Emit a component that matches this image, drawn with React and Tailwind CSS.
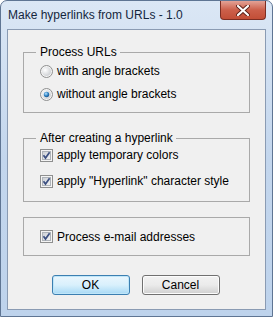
import React from 'react';

const font = { fontFamily: '"Liberation Sans", Arial, sans-serif' };

const CheckBox = () => (
  <svg width="13" height="13" viewBox="0 0 13 13" className="shrink-0">
    <defs>
      <linearGradient id="cbg" x1="0" y1="0" x2="1" y2="1">
        <stop offset="0" stopColor="#cbcfd5" />
        <stop offset="1" stopColor="#f4f4f4" />
      </linearGradient>
    </defs>
    <rect x="0.5" y="0.5" width="12" height="12" fill="#f4f4f4" stroke="#8e8f8f" />
    <rect x="2.5" y="2.5" width="8" height="8" fill="url(#cbg)" stroke="#aeb3b9" />
    <path d="M3.5 6.2 L5.5 9 L9.6 3.2" fill="none" stroke="#3b4f81" strokeWidth="1.7" />
  </svg>
);

const Radio = ({ on }) => (
  <svg width="13" height="13" viewBox="0 0 13 13" className="shrink-0">
    <defs>
      <radialGradient id="rbg" cx="0.35" cy="0.35" r="0.8">
        <stop offset="0" stopColor="#ffffff" />
        <stop offset="1" stopColor="#c6c9cd" />
      </radialGradient>
      <radialGradient id="rdot" cx="0.4" cy="0.35" r="0.7">
        <stop offset="0" stopColor="#b9e2ff" />
        <stop offset="0.6" stopColor="#2a7fc0" />
        <stop offset="1" stopColor="#1b4f86" />
      </radialGradient>
    </defs>
    <circle cx="6.5" cy="6.5" r="6" fill="#f4f4f4" stroke="#8e8f8f" />
    <circle cx="6.5" cy="6.5" r="4.5" fill="url(#rbg)" />
    {on && <circle cx="6.5" cy="6.5" r="2.7" fill="url(#rdot)" />}
  </svg>
);

const Group = ({ title, children, className = '' }) => (
  <fieldset className={`border border-[#a9a9a9] pl-[12px] pr-[12px] ${className}`}>
    <legend className="pl-[4px] pr-[3px] leading-[15px] text-black">{title}</legend>
    {children}
  </fieldset>
);

const Row = ({ icon, label }) => (
  <div className="flex items-center gap-[4px] h-[16px] pl-[4px] leading-[16px]">
    {icon}
    <span>{label}</span>
  </div>
);

export default function App() {
  return (
    <div
      style={font}
      className="w-[273px] h-[317px] flex flex-col rounded-t-[7px] border border-[#5f7593] bg-gradient-to-b from-[#dbe7f5] via-[#c3d6ed] to-[#bed3ec] text-[12px] text-black"
    >
      <div className="flex h-[28px] items-start justify-between pl-[7px] pr-[6px]">
        <span className="mt-[7px] leading-[15px] text-[#14263d]">Make hyperlinks from URLs - 1.0</span>
        <div className="flex h-[19px] w-[46px] items-center justify-center rounded-b-[4px] border border-t-0 border-[#7c2d22] bg-gradient-to-b from-[#e3a296] via-[#cc5f4a] to-[#c24e37]">
          <svg width="14" height="11" viewBox="0 0 14 11">
            <path d="M2 1 L12 10 M12 1 L2 10" stroke="#5a2018" strokeWidth="4" strokeLinecap="round" />
            <path d="M2 1 L12 10 M12 1 L2 10" stroke="#ffffff" strokeWidth="2.2" strokeLinecap="round" />
          </svg>
        </div>
      </div>
      <div className="mx-[6px] mb-[6px] flex flex-1 flex-col border border-[#8a9bb3] bg-[#f0f0f0] px-[15px] pt-[15px]">
        <Group title="Process URLs" className="pb-[10px]">
          <div className="mt-[3px] flex flex-col gap-[7px]">
            <Row icon={<Radio />} label="with angle brackets" />
            <Row icon={<Radio on />} label="without angle brackets" />
          </div>
        </Group>
        <Group title="After creating a hyperlink" className="mt-[18px] pb-[12px]">
          <div className="mt-[1px] flex flex-col gap-[10px]">
            <Row icon={<CheckBox />} label="apply temporary colors" />
            <Row icon={<CheckBox />} label={'apply "Hyperlink" character style'} />
          </div>
        </Group>
        <div className="mt-[15px] flex h-[39px] items-center border border-[#a9a9a9] pl-[12px]">
          <Row icon={<CheckBox />} label="Process e-mail addresses" />
        </div>
        <div className="mt-[19px] flex justify-center gap-[12px] pr-[2px]">
          <button className="h-[20px] w-[78px] rounded-[3px] border border-[#3c7fb1] bg-gradient-to-b from-[#eaf6fd] via-[#d9f0fc] to-[#a7d9f5] leading-[18px] shadow-[inset_0_0_0_1px_#bfe6f9]">
            OK
          </button>
          <button className="h-[20px] w-[78px] rounded-[3px] border border-[#707070] bg-gradient-to-b from-[#f2f2f2] via-[#ebebeb] to-[#cfcfcf] leading-[18px] shadow-[inset_0_0_0_1px_#fcfcfc]">
            Cancel
          </button>
        </div>
      </div>
    </div>
  );
}
